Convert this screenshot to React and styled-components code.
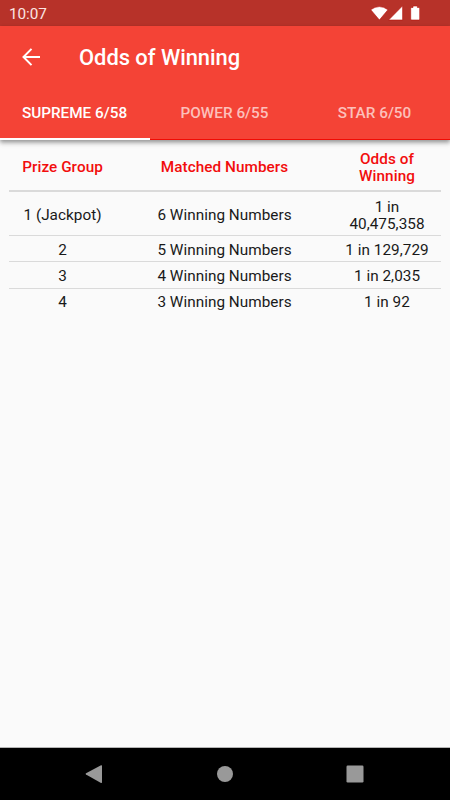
import React from "react";
import styled, { createGlobalStyle } from "styled-components";

const GlobalStyle = createGlobalStyle`
  * { box-sizing: border-box; }
  body { margin: 0; background: #fafafa; }
`;

const Screen = styled.div`
  width: 450px;
  height: 800px;
  display: flex;
  flex-direction: column;
  background: #fafafa;
  font-family: Roboto, "Liberation Sans", sans-serif;
  overflow: hidden;
`;

const StatusBar = styled.div`
  flex: none;
  height: 26px;
  padding: 1px 30px 0 9px;
  display: flex;
  align-items: center;
  justify-content: space-between;
  background: #b73229;
  color: #fbe4e2;
`;

const Clock = styled.span`
  font-size: 15.3px;
  line-height: 18px;
  letter-spacing: -0.05px;
`;

const StatusIcons = styled.svg`
  display: block;
  width: 50px;
  height: 16px;
  margin-bottom: 1px;
`;

const Header = styled.header`
  flex: none;
  height: 114px;
  background: #f44336;
  border-bottom: 1px solid #f00b04;
  box-shadow: 0 2px 4px rgba(0, 0, 0, 0.32), 0 4px 5px rgba(0, 0, 0, 0.12);
`;

const AppBar = styled.div`
  height: 61px;
  padding-left: 22px;
  display: flex;
  align-items: center;
`;

const BackButton = styled.button`
  width: 18px;
  height: 18px;
  padding: 0;
  border: 0;
  background: none;
  display: block;
`;

const Title = styled.h1`
  margin: 0 0 0 39px;
  padding-top: 2px;
  color: #fff;
  font-size: 21.9px;
  line-height: 26px;
  font-weight: 500;
  letter-spacing: -0.02px;
`;

const Tabs = styled.nav`
  display: grid;
  grid-template-columns: repeat(3, 1fr);
  height: 53px;
`;

const Tab = styled.div`
  display: flex;
  align-items: center;
  justify-content: center;
  padding: 1px 1px 0 0;
  border-bottom: 2px solid ${(p) => (p.$active ? "#fff" : "transparent")};
  color: ${(p) => (p.$active ? "#fff" : "#fcc0bb")};
  font-size: 15.3px;
  line-height: 18px;
  font-weight: 500;
`;

const Table = styled.div`
  flex: 1;
  padding: 0 9px;
`;

const Row = styled.div`
  display: grid;
  grid-template-columns: 107px 1fr 108px;
  align-items: center;
  height: ${(p) => p.$height}px;
  border-bottom: ${(p) => p.$line}px solid #dadada;
`;

const Cell = styled.div`
  padding-top: ${(p) => p.$top}px;
  text-align: center;
  white-space: pre-line;
  color: #191919;
  font-size: 15.3px;
  line-height: 17.5px;
  letter-spacing: 0.03px;
`;

const HeadCell = styled(Cell)`
  color: #f20d0d;
  font-weight: 500;
  line-height: 17px;
  letter-spacing: 0.06px;
`;

const NavBar = styled.footer`
  flex: none;
  height: 53px;
  display: flex;
  align-items: center;
  justify-content: space-between;
  padding: 0 86px 0 85px;
  background: #000;
  border-top: 1px solid #b4b4b4;
`;

const NavIcon = styled.svg`
  display: block;
  width: 18px;
  height: 18px;
  fill: #999;
`;

const tabs = ["SUPREME 6/58", "POWER 6/55", "STAR 6/50"];

const columns = ["Prize Group", "Matched Numbers", "Odds of\nWinning"];

const rows = [
  { cells: ["1 (Jackpot)", "6 Winning Numbers", "1 in\n40,475,358"], height: 44, line: 1, top: 5 },
  { cells: ["2", "5 Winning Numbers", "1 in 129,729"], height: 26, line: 1, top: 5 },
  { cells: ["3", "4 Winning Numbers", "1 in 2,035"], height: 27, line: 1, top: 4 },
  { cells: ["4", "3 Winning Numbers", "1 in 92"], height: 26, line: 0, top: 2 },
];

export default function App() {
  return (
    <>
      <GlobalStyle />
      <Screen>
        <StatusBar>
          <Clock>10:07</Clock>
          <StatusIcons viewBox="0 0 50 16" fill="#fff" stroke="#b90e08" strokeWidth="0.6">
            <path d="M0.7 4.7Q9.3-1.5 18 4.7L9.4 15Z" />
            <path d="M32.6 0.8V15H18.6Z" />
            <path d="M43 1h4.4v1.5h1.3q1 0 1 1V14q0 1-1 1h-7q-1 0-1-1V3.500q0-1 1-1H43Z" />
          </StatusIcons>
        </StatusBar>
        <Header>
          <AppBar>
            <BackButton aria-label="Back">
              <svg width="18" height="18" viewBox="0 0 18 18" fill="none" stroke="#fff" strokeWidth="2">
                <path d="M9.500 0.900L1.500 9L9.500 17.100M1.500 9H18" />
              </svg>
            </BackButton>
            <Title>Odds of Winning</Title>
          </AppBar>
          <Tabs>
            {tabs.map((label, i) => (
              <Tab key={label} $active={i === 0}>{label}</Tab>
            ))}
          </Tabs>
        </Header>
        <Table>
          <Row $height={52} $line={2}>
            {columns.map((label) => (
              <HeadCell key={label} $top={5}>{label}</HeadCell>
            ))}
          </Row>
          {rows.map((row) => (
            <Row key={row.cells[0]} $height={row.height} $line={row.line}>
              {row.cells.map((text) => (
                <Cell key={text} $top={row.top}>{text}</Cell>
              ))}
            </Row>
          ))}
        </Table>
        <NavBar>
          <NavIcon viewBox="0 0 18 18"><path d="M1 8.300Q0.400 9 1 9.400L16 18Q17 18.200 17 17V1Q17-0.200 16 0.300Z" /></NavIcon>
          <NavIcon viewBox="0 0 18 18"><circle cx="9" cy="9" r="8" /></NavIcon>
          <NavIcon viewBox="0 0 18 18"><rect x="0.500" y="0.500" width="17" height="17" rx="1.200" /></NavIcon>
        </NavBar>
      </Screen>
    </>
  );
}
